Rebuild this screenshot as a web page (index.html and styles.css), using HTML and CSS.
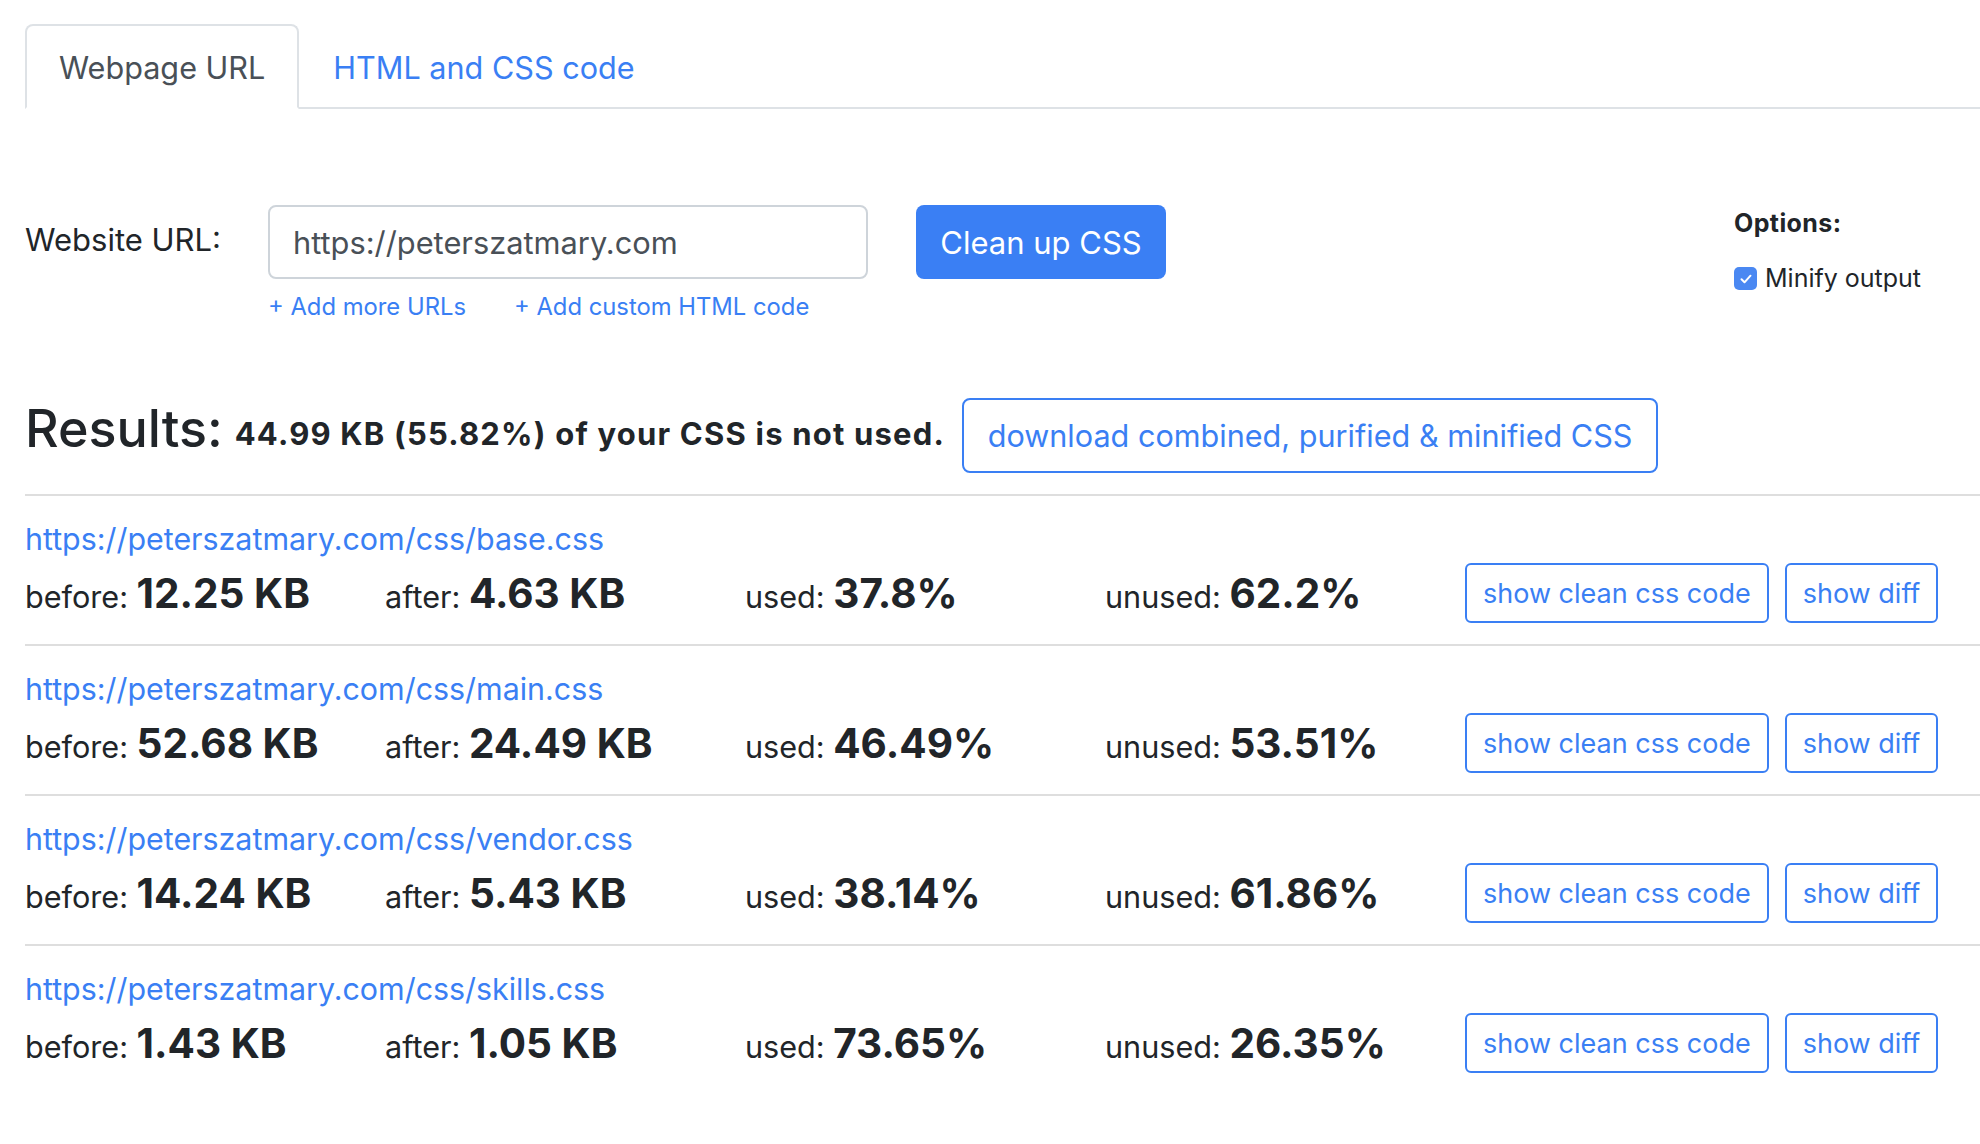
FILE: index.html
```html
<!DOCTYPE html>
<html lang="en">
<head>
<meta charset="utf-8">
<title>PurifyCSS Online</title>
<link rel="stylesheet" href="styles.css">
</head>
<body>
<div class="page">
  <ul class="tabs">
    <li class="tab tab-active">Webpage URL</li>
    <li class="tab">HTML and CSS code</li>
  </ul>

  <div class="form-row">
    <label class="url-label" for="url">Website URL:</label>
    <div class="url-field">
      <input class="url-input" id="url" type="text" value="https://peterszatmary.com">
      <div class="add-links">
        <a class="add-link" href="#">+ Add more URLs</a>
        <a class="add-link" href="#">+ Add custom HTML code</a>
      </div>
    </div>
    <button class="btn btn-primary" type="button">Clean up CSS</button>
    <div class="options">
      <div class="options-title">Options:</div>
      <label class="check">
        <span class="check-box"><svg viewBox="0 0 16 16" width="16" height="16"><path d="M3.5 8.3l3 3 6-6.6" fill="none" stroke="#fff" stroke-width="2" stroke-linecap="round" stroke-linejoin="round"/></svg></span>
        <span>Minify output</span>
      </label>
    </div>
  </div>

  <div class="results-head">
    <h3 class="results-title">Results:</h3>
    <strong class="summary">44.99 KB (55.82%) of your CSS is not used.</strong>
    <button class="btn btn-outline" type="button">download combined, purified &amp; minified CSS</button>
  </div>

  <div class="result">
    <a class="file-link" href="#">https://peterszatmary.com/css/base.css</a>
    <div class="stats">
      <div class="stat">before: <b>12.25 KB</b></div>
      <div class="stat">after: <b>4.63 KB</b></div>
      <div class="stat">used: <b>37.8%</b></div>
      <div class="stat">unused: <b>62.2%</b></div>
      <div class="actions">
        <button class="btn btn-sm" type="button">show clean css code</button>
        <button class="btn btn-sm" type="button">show diff</button>
      </div>
    </div>
  </div>

  <div class="result">
    <a class="file-link" href="#">https://peterszatmary.com/css/main.css</a>
    <div class="stats">
      <div class="stat">before: <b>52.68 KB</b></div>
      <div class="stat">after: <b>24.49 KB</b></div>
      <div class="stat">used: <b>46.49%</b></div>
      <div class="stat">unused: <b>53.51%</b></div>
      <div class="actions">
        <button class="btn btn-sm" type="button">show clean css code</button>
        <button class="btn btn-sm" type="button">show diff</button>
      </div>
    </div>
  </div>

  <div class="result">
    <a class="file-link" href="#">https://peterszatmary.com/css/vendor.css</a>
    <div class="stats">
      <div class="stat">before: <b>14.24 KB</b></div>
      <div class="stat">after: <b>5.43 KB</b></div>
      <div class="stat">used: <b>38.14%</b></div>
      <div class="stat">unused: <b>61.86%</b></div>
      <div class="actions">
        <button class="btn btn-sm" type="button">show clean css code</button>
        <button class="btn btn-sm" type="button">show diff</button>
      </div>
    </div>
  </div>

  <div class="result result-last">
    <a class="file-link" href="#">https://peterszatmary.com/css/skills.css</a>
    <div class="stats">
      <div class="stat">before: <b>1.43 KB</b></div>
      <div class="stat">after: <b>1.05 KB</b></div>
      <div class="stat">used: <b>73.65%</b></div>
      <div class="stat">unused: <b>26.35%</b></div>
      <div class="actions">
        <button class="btn btn-sm" type="button">show clean css code</button>
        <button class="btn btn-sm" type="button">show diff</button>
      </div>
    </div>
  </div>
</div>
</body>
</html>
```

FILE: styles.css
```css
* { box-sizing: border-box; }

html, body {
  margin: 0;
  background: #fff;
}

body {
  font-family: Inter, "Noto Sans", "Liberation Sans", sans-serif;
  font-size: 31px;
  color: #212529;
  overflow: hidden;
}

.page {
  padding: 24px 0 0 25px;
}

a { color: #3a7ff4; text-decoration: none; }

/* tabs */
.tabs {
  list-style: none;
  margin: 0;
  padding: 0;
  display: flex;
  border-bottom: 2px solid #dee2e6;
}

.tab {
  height: 85px;
  margin-bottom: -2px;
  padding: 3px 32px 0;
  display: flex;
  align-items: center;
  border: 2px solid transparent;
  border-radius: 8px 8px 0 0;
  color: #3a7ff4;
  font-size: 30.6px;
  line-height: 1;
}

.tab-active {
  color: #495057;
  border-color: #dee2e6 #dee2e6 #fff;
  background: #fff;
}

/* form */
.form-row {
  display: flex;
  align-items: flex-start;
  margin-top: 96px;
}

.url-label {
  width: 243px;
  height: 74px;
  line-height: 70px;
}

.url-field {
  width: 600px;
}

.url-input {
  display: block;
  width: 600px;
  height: 74px;
  margin: 0;
  padding: 0 23px;
  border: 2px solid #ced4da;
  border-radius: 8px;
  font-family: inherit;
  font-size: 30.8px;
  color: #495057;
  outline: none;
}

.add-links {
  display: flex;
  gap: 48px;
  margin-top: 10px;
  font-size: 23.8px;
  line-height: 36px;
}

.btn {
  font-family: inherit;
  cursor: pointer;
  margin: 0;
  background: #fff;
}

.btn-primary {
  margin-left: 48px;
  height: 74px;
  width: 250px;
  padding: 0;
  border: 0;
  border-radius: 8px;
  background: #3a7ff4;
  color: #fff;
  font-size: 31px;
}

.options {
  margin-left: auto;
  width: 246px;
  margin-top: 0;
  font-size: 25px;
  line-height: 37px;
}

.options-title {
  font-weight: 700;
  letter-spacing: 0.4px;
  margin-bottom: 18px;
}

.check {
  display: flex;
  align-items: center;
  gap: 8px;
}

.check-box {
  width: 23px;
  height: 23px;
  border-radius: 5px;
  background: #4a88f2;
  display: flex;
  align-items: center;
  justify-content: center;
}

/* results */
.results-head {
  display: flex;
  align-items: baseline;
  margin-top: 73px;
  margin-bottom: 21px;
}

.results-title {
  margin: 0 12px 0 0;
  font-size: 52px;
  font-weight: 500;
  line-height: 1.2;
}

.summary {
  font-weight: 700;
  font-size: 31px;
  letter-spacing: 1.2px;
  margin-right: 17px;
  position: relative;
  top: -2px;
}

.btn-outline {
  height: 75px;
  width: 696px;
  padding: 0;
  border: 2px solid #3a7ff4;
  border-radius: 8px;
  color: #3a7ff4;
  font-size: 30.6px;
}

.result {
  border-top: 2px solid #dedede;
  padding: 20px 0 21px;
}

.file-link {
  display: block;
  font-size: 30.4px;
  line-height: 46px;
}

.stats {
  display: grid;
  grid-template-columns: 360px 360px 360px 360px auto;
  align-items: center;
  height: 60px;
  margin-top: 1px;
}

.stat {
  font-size: 30.6px;
  white-space: nowrap;
}

.stat b {
  font-size: 40.5px;
  font-weight: 700;
}

.actions {
  display: flex;
  gap: 16px;
}

.btn-sm {
  height: 60px;
  padding: 0 16px;
  border: 2px solid #3a7ff4;
  border-radius: 6px;
  color: #3a7ff4;
  font-size: 27px;
  white-space: nowrap;
}
```
